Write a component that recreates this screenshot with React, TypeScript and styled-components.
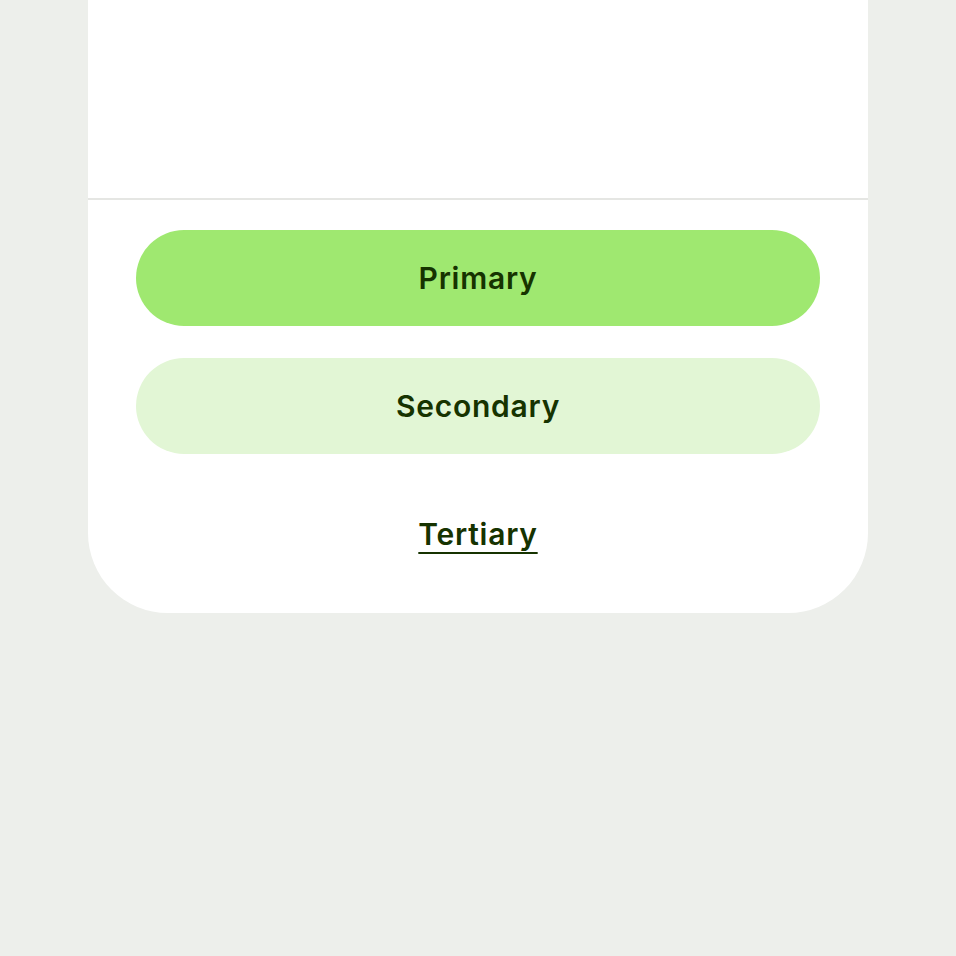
import React from "react";
import styled, { createGlobalStyle } from "styled-components";

const GlobalStyle = createGlobalStyle`
  html, body {
    margin: 0;
    padding: 0;
    background: #edefeb;
    font-family: Inter, "Noto Sans", sans-serif;
  }
`;

const Page = styled.div`
  width: 956px;
  height: 956px;
  display: flex;
  justify-content: center;
  align-items: flex-start;
`;

const Sheet = styled.div`
  width: 780px;
  background: #ffffff;
  border-radius: 0 0 80px 80px;
  display: flex;
  flex-direction: column;
`;

const Body = styled.div`
  height: 198px;
  border-bottom: 2px solid #e5e6e3;
`;

const Footer = styled.div`
  padding: 30px 48px 31px;
  display: flex;
  flex-direction: column;
  gap: 32px;
`;

const Button = styled.button<{ $variant: "primary" | "secondary" | "tertiary" }>`
  height: 96px;
  width: 100%;
  border: none;
  border-radius: 48px;
  font-family: Inter, "Noto Sans", sans-serif;
  font-weight: 600;
  font-size: 30px;
  letter-spacing: 0.75px;
  color: #163300;
  cursor: pointer;
  background: ${(p) =>
    p.$variant === "primary"
      ? "#9fe870"
      : p.$variant === "secondary"
      ? "#e2f6d5"
      : "transparent"};
  text-decoration: ${(p) => (p.$variant === "tertiary" ? "underline" : "none")};
  text-decoration-thickness: 2px;
  text-underline-offset: 7px;
`;

export default function App() {
  return (
    <>
      <GlobalStyle />
      <Page>
        <Sheet>
          <Body />
          <Footer>
            <Button $variant="primary">Primary</Button>
            <Button $variant="secondary">Secondary</Button>
            <Button $variant="tertiary">Tertiary</Button>
          </Footer>
        </Sheet>
      </Page>
    </>
  );
}
